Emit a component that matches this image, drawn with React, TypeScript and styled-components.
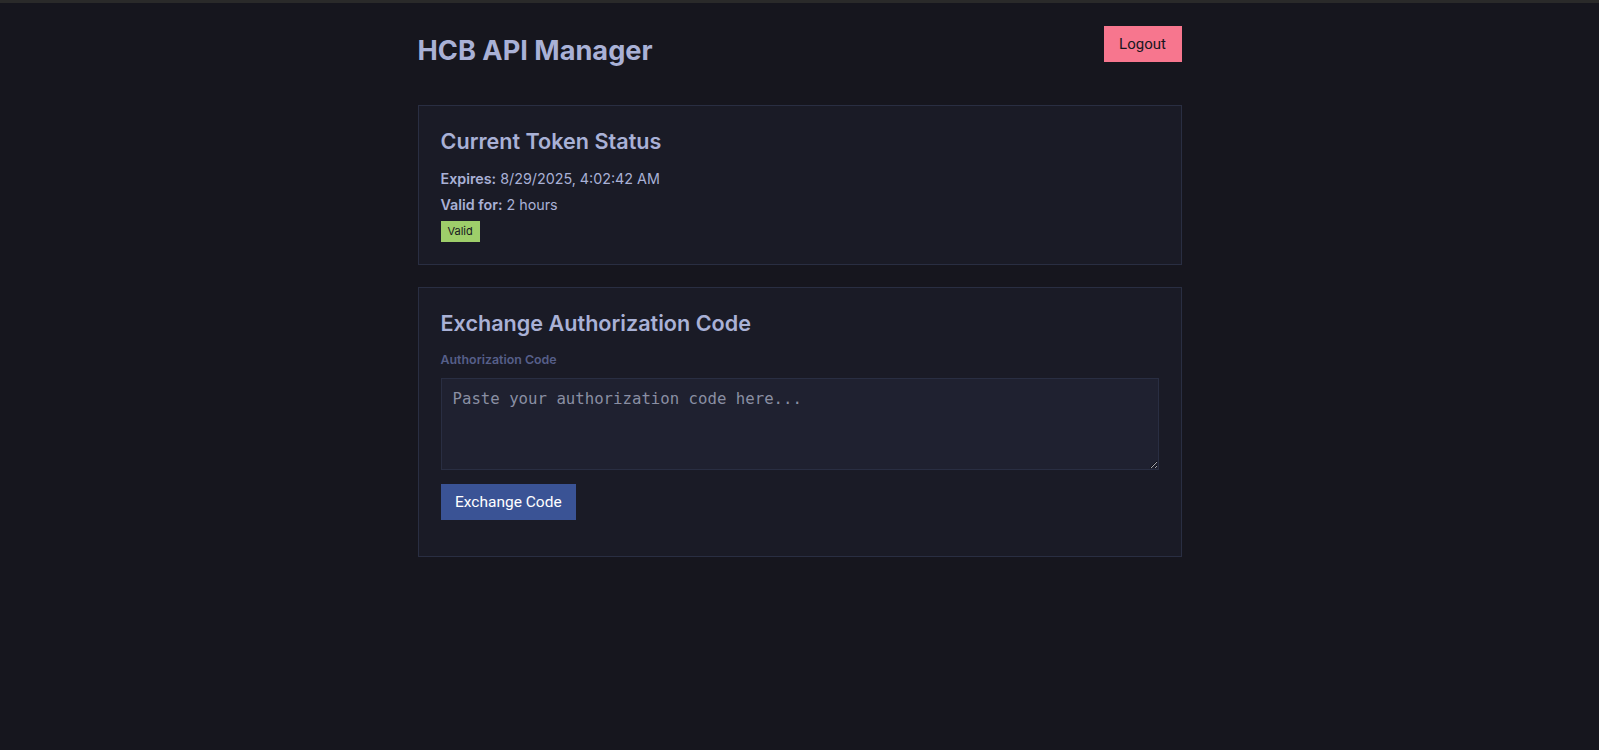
import React from "react";
import styled, { createGlobalStyle } from "styled-components";

const Global = createGlobalStyle`
  html, body { margin: 0; padding: 0; }
  body {
    background: #16161e;
    font-family: Inter, "Noto Sans", sans-serif;
    color: #a9b1d6;
    border-top: 3px solid #2a2a2a;
    min-height: 747px;
  }
`;

const Container = styled.div`
  width: 764px;
  margin: 0 auto;
  padding-top: 23px;
`;

const Header = styled.header`
  display: flex;
  justify-content: space-between;
  align-items: flex-start;
  margin-bottom: 37px;
`;

const Title = styled.h1`
  margin: 8px 0 0;
  font-size: 27.2px;
  line-height: 34px;
  font-weight: 700;
  color: #a9b1d6;
`;

const LogoutButton = styled.button`
  height: 36px;
  width: 78px;
  border: none;
  border-radius: 0;
  background: #f7768e;
  color: #16161e;
  font-family: Roboto, "Liberation Sans", sans-serif;
  font-size: 15px;
  cursor: pointer;
`;

const Card = styled.section`
  display: flex;
  flex-direction: column;
  align-items: flex-start;
  background: #1a1b26;
  border: 1px solid #292e42;
  padding: 21px 22px 22px 21px;
  margin-bottom: 22px;
`;

const CardTitle = styled.h2`
  margin: 0 0 15px 1px;
  font-size: 21.6px;
  line-height: 28px;
  font-weight: 600;
  color: #a9b1d6;
`;

const InfoLine = styled.p`
  margin: 0 0 8.5px 1px;
  font-size: 14.3px;
  line-height: 17px;
  color: #a9b1d6;
  strong { font-weight: 600; }
`;

const Badge = styled.span<{ $tone: "ok" | "bad" }>`
  display: block;
  margin-left: 1px;
  padding: 3px 7px;
  font-size: 11px;
  line-height: 15px;
  background: ${(p) => (p.$tone === "ok" ? "#9ece6a" : "#f7768e")};
  color: #16161e;
`;

const Label = styled.label`
  display: block;
  margin: 0 0 9.5px 1px;
  font-size: 12.4px;
  line-height: 16px;
  font-weight: 600;
  color: #565f89;
`;

const TextArea = styled.textarea`
  display: block;
  box-sizing: border-box;
  align-self: stretch;
  margin-left: 1px;
  height: 92px;
  padding: 9px 11px;
  background: #1f2130;
  border: 1px solid #292e42;
  border-radius: 0;
  color: #c0caf5;
  font-family: "DejaVu Sans Mono", monospace;
  font-size: 15.7px;
  line-height: 22px;
  resize: vertical;
  outline: none;
  &::placeholder { color: #8a8fa3; }
`;

const PrimaryButton = styled.button`
  margin: 14px 0 14px 1px;
  height: 36px;
  padding: 0 14.5px;
  border: none;
  border-radius: 0;
  background: #3a5395;
  color: #ffffff;
  font-family: Roboto, "Liberation Sans", sans-serif;
  font-size: 15.5px;
  cursor: pointer;
`;

export default function App() {
  return (
    <>
      <Global />
      <Container>
        <Header>
          <Title>HCB API Manager</Title>
          <LogoutButton>Logout</LogoutButton>
        </Header>
        <Card>
          <CardTitle>Current Token Status</CardTitle>
          <InfoLine>
            <strong>Expires:</strong> 8/29/2025, 4:02:42 AM
          </InfoLine>
          <InfoLine>
            <strong>Valid for:</strong> 2 hours
          </InfoLine>
          <Badge $tone="ok">Valid</Badge>
        </Card>
        <Card>
          <CardTitle>Exchange Authorization Code</CardTitle>
          <Label htmlFor="code">Authorization Code</Label>
          <TextArea id="code" placeholder="Paste your authorization code here..." />
          <PrimaryButton>Exchange Code</PrimaryButton>
        </Card>
      </Container>
    </>
  );
}
